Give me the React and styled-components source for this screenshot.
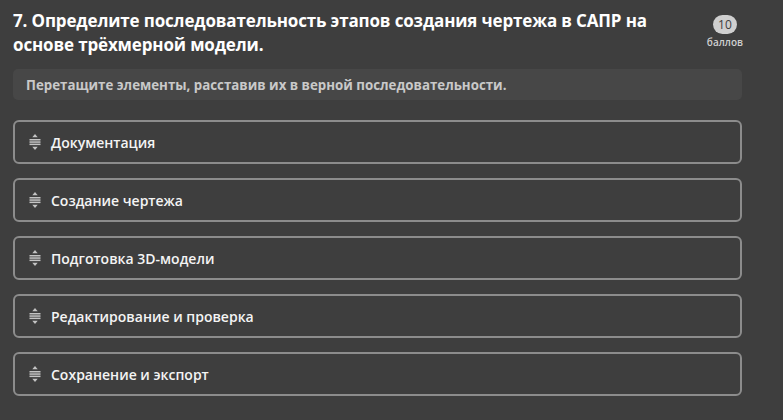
import React from 'react';
import styled, { createGlobalStyle } from 'styled-components';

const GlobalStyle = createGlobalStyle`
  html, body {
    margin: 0;
    padding: 0;
    background: #3e3e3e;
  }
  body {
    font-family: "Open Sans", "Noto Sans", sans-serif;
    color: #ffffff;
  }
`;

const Page = styled.div`
  padding: 9px 41px 20px 13px;
`;

const Header = styled.div`
  display: flex;
  justify-content: space-between;
  align-items: flex-start;
`;

const Title = styled.h1`
  margin: 0;
  font-size: 17px;
  line-height: 24px;
  font-weight: 700;
  color: #ffffff;
  max-width: 640px;
  letter-spacing: -0.15px;
`;

const Points = styled.div`
  display: flex;
  flex-direction: column;
  align-items: center;
  margin-top: 6px;
  margin-right: -1px;
`;

const PointsBadge = styled.span`
  min-width: 22px;
  height: 19px;
  padding: 0 1px;
  border-radius: 10px;
  background: #cfcfcf;
  color: #3e3e3e;
  font-size: 12px;
  line-height: 19px;
  text-align: center;
`;

const PointsLabel = styled.span`
  margin-top: 1px;
  font-size: 10px;
  font-weight: 600;
  color: #cfcfcf;
`;

const Hint = styled.div`
  margin-top: 12px;
  height: 31px;
  padding: 0 13px;
  display: flex;
  align-items: center;
  border-radius: 5px;
  background: #474747;
  color: #c9c9c9;
  font-size: 13.3px;
  font-weight: 700;
`;

const List = styled.ul`
  list-style: none;
  margin: 20px 0 0;
  padding: 0;
  display: flex;
  flex-direction: column;
  gap: 14px;
`;

const Item = styled.li`
  height: 44px;
  box-sizing: border-box;
  border: 2px solid #8c8c8c;
  border-radius: 6px;
  display: flex;
  align-items: center;
  gap: 10px;
  padding: 0 14px;
  font-size: 14px;
  font-weight: 600;
  color: #f4f4f4;
  cursor: grab;
`;

const Handle = () => (
  <svg width="12" height="18" viewBox="0 0 12 18" fill="#c4c4c4">
    <path d="M6 1 L8.7 4.2 H3.3 Z" />
    <rect x="0.5" y="6" width="11" height="1.5" />
    <rect x="0.5" y="8.3" width="11" height="1.5" />
    <rect x="0.5" y="10.6" width="11" height="1.5" />
    <path d="M6 17 L8.7 13.8 H3.3 Z" />
  </svg>
);

const steps = [
  'Документация',
  'Создание чертежа',
  'Подготовка 3D-модели',
  'Редактирование и проверка',
  'Сохранение и экспорт',
];

export default function App() {
  return (
    <>
      <GlobalStyle />
      <Page>
        <Header>
          <Title>
            7. Определите последовательность этапов создания чертежа в САПР на основе трёхмерной модели.
          </Title>
          <Points>
            <PointsBadge>10</PointsBadge>
            <PointsLabel>баллов</PointsLabel>
          </Points>
        </Header>
        <Hint>Перетащите элементы, расставив их в верной последовательности.</Hint>
        <List>
          {steps.map((s) => (
            <Item key={s}>
              <Handle />
              {s}
            </Item>
          ))}
        </List>
      </Page>
    </>
  );
}
